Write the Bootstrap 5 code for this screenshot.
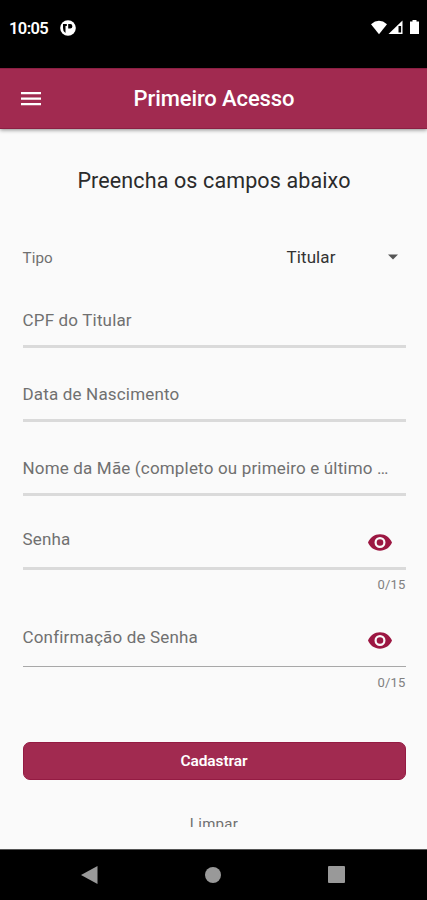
<!DOCTYPE html>
<html lang="pt-BR">
<head>
<meta charset="utf-8">
<meta name="viewport" content="width=device-width, initial-scale=1">
<title>Primeiro Acesso</title>
<link href="https://cdn.jsdelivr.net/npm/bootstrap@5.3.0/dist/css/bootstrap.min.css" rel="stylesheet">
<style>
body{font-family:Roboto,"Liberation Sans",sans-serif;background:#fafafa;color:#707070;line-height:1.2}
.screen{height:900px;overflow:hidden}
.status-bar{height:67.5px;padding:0 7px 12px 9px}
.clock{font-size:16.5px;font-weight:600;letter-spacing:-.6px;width:51px;padding-top:2px}
.app-bar{height:61px;padding:2px 20px 0;background:#a12a50;box-shadow:0 1px 4px rgba(0,0,0,.45);border-top:1px solid #8b1f43;border-bottom:1px solid #8b1f43;z-index:1}
.app-title{font-size:22px;font-weight:500;letter-spacing:-.1px;padding:1px 21px 0 0}
.content{padding:0 21.5px 0 22.5px}
.headline{font-size:21.5px;color:#2b2b2b;letter-spacing:.12px;margin-top:39px}
.type-row{height:40px;margin-top:44px}
.type-label{font-size:15.2px;letter-spacing:.1px;padding-top:1px}
.type-value{font-size:17px;color:#333;letter-spacing:.1px;width:101px}
.field{height:74px;border-bottom:3px solid #dadada;font-size:17px;letter-spacing:.17px;padding-bottom:15px}
.field-first{height:71px}
.field-pass{height:73.5px;padding-bottom:17.5px}
.field-last{height:73.5px;border-bottom:1.5px solid #a8a8a8;padding-bottom:19px}
.eye{margin:0 14px -2px 0}
.counter{font-size:13px;height:24px;padding-top:7.5px;letter-spacing:.2px;color:#808080}
.btn-main{height:38px;background:#a12a50;border:1px solid #941b43;border-radius:7px;font-size:15.5px;font-weight:600;letter-spacing:-.1px;color:#fff;padding:2px 0 0;margin-top:50.5px}
.clear-link{font-size:15px;height:13px;margin-top:34px;letter-spacing:.3px;line-height:21px}
.nav-keys{height:51px;border-top:1px solid #555;padding:0 82px 1px 81px}
</style>
</head>
<body>
<div class="screen d-flex flex-column">
  <div class="status-bar bg-black text-white d-flex align-items-center flex-shrink-0">
    <span class="clock">10:05</span>
    <svg width="16" height="16" viewBox="0 0 16 16"><circle cx="8" cy="8" r="7.8" fill="#fff"/><path d="M3 4h3.800v2H5.500v7A5.500 5.500 0 0 1 3 8zM8.200 4h2a2.200 2.200 0 0 1 0 4.400H8.200z" fill="#000"/></svg>
    <svg class="ms-auto" width="49" height="16" viewBox="0 0 49 16"><path d="M0 4.200Q8 -2.500 16 4.200L8 14.200Z" fill="#fff"/><path d="M31.500.5V14H17.500Z" fill="#fff"/><path d="M27.500 6h2.600v6.500h-2.600z" fill="#000"/><path d="M39 1.500h2.500V0h4v1.500H48V14h-9z" fill="#fff"/></svg>
  </div>
  <header class="app-bar position-relative d-flex align-items-center flex-shrink-0 text-white">
    <svg width="22" height="16" viewBox="0 0 22 16"><path d="M1 2.200h20M1 7.700h20M1 13.200h20" stroke="#fff" stroke-width="2.300"/></svg>
    <div class="app-title flex-grow-1 text-center">Primeiro Acesso</div>
  </header>
  <main class="content flex-grow-1 overflow-hidden">
    <div class="headline text-center">Preencha os campos abaixo</div>
    <div class="type-row d-flex align-items-center">
      <span class="type-label me-auto">Tipo</span>
      <span class="type-value">Titular</span>
      <svg class="me-2" width="10" height="6" viewBox="0 0 10 6"><path d="M0 .5h10L5 5.500z" fill="#555"/></svg>
    </div>
    <div class="field field-first d-flex align-items-end">CPF do Titular</div>
    <div class="field d-flex align-items-end">Data de Nascimento</div>
    <div class="field d-flex align-items-end text-nowrap">Nome da Mãe (completo ou primeiro e último …</div>
    <div class="field field-pass d-flex align-items-end justify-content-between"><span>Senha</span>
      <svg class="eye" width="24" height="17" viewBox="0 0 24 17"><path fill="#9c1742" fill-rule="evenodd" d="M12 .3C6.500.3 2 3.700 0 8.500c2 4.800 6.500 8.200 12 8.200s10-3.400 12-8.200C22 3.700 17.500.3 12 .3zM12 14a5.500 5.500 0 1 1 0-11 5.500 5.500 0 0 1 0 11zm0-8.800a3.300 3.300 0 1 0 0 6.600 3.300 3.300 0 0 0 0-6.600z"/></svg>
    </div>
    <div class="counter text-end">0/15</div>
    <div class="field field-last d-flex align-items-end justify-content-between"><span>Confirmação de Senha</span>
      <svg class="eye" width="24" height="17" viewBox="0 0 24 17"><path fill="#9c1742" fill-rule="evenodd" d="M12 .3C6.500.3 2 3.700 0 8.500c2 4.800 6.500 8.200 12 8.200s10-3.400 12-8.200C22 3.700 17.500.3 12 .3zM12 14a5.500 5.500 0 1 1 0-11 5.500 5.500 0 0 1 0 11zm0-8.800a3.300 3.300 0 1 0 0 6.600 3.300 3.300 0 0 0 0-6.600z"/></svg>
    </div>
    <div class="counter text-end">0/15</div>
    <button class="btn btn-main w-100 d-block" type="button">Cadastrar</button>
    <div class="clear-link text-center overflow-hidden">Limpar</div>
  </main>
  <nav class="nav-keys bg-black d-flex align-items-center justify-content-between flex-shrink-0">
    <svg width="17" height="18" viewBox="0 0 17 18"><path d="M0 9 16.500 0v18z" fill="#999"/></svg>
    <svg width="16" height="16" viewBox="0 0 16 16"><circle cx="8" cy="8" r="8" fill="#999"/></svg>
    <svg width="17" height="17" viewBox="0 0 17 17"><rect width="17" height="17" rx="1" fill="#999"/></svg>
  </nav>
</div>
<script src="https://cdn.jsdelivr.net/npm/bootstrap@5.3.0/dist/js/bootstrap.bundle.min.js"></script>
</body>
</html>
